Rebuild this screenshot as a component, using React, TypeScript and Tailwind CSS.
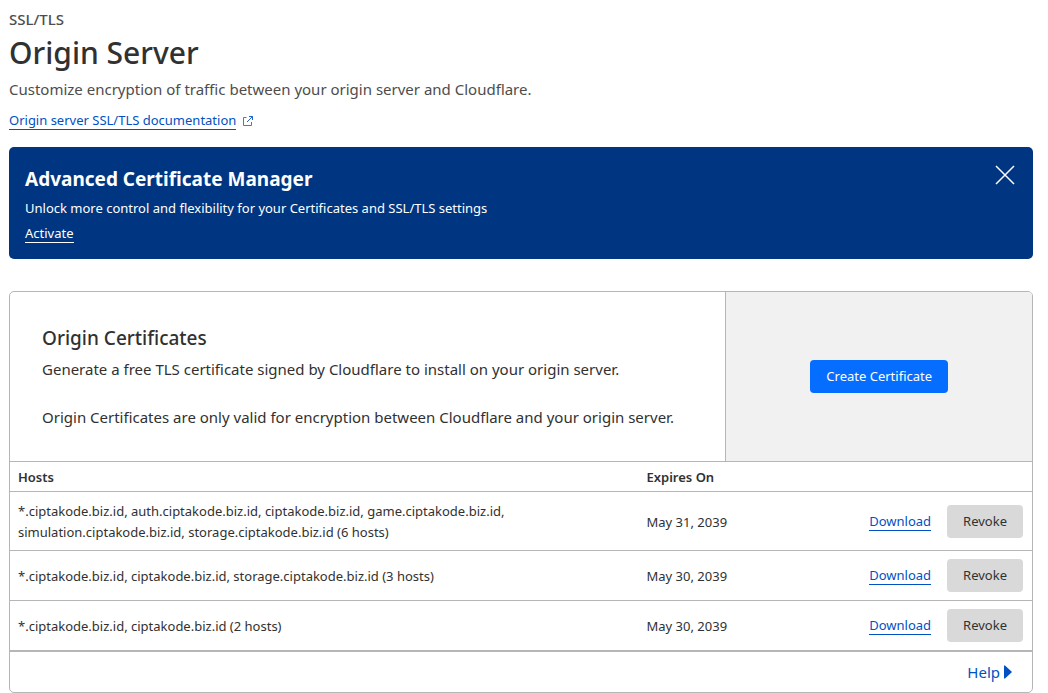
import React from "react";

type Certificate = {
  hosts: string;
  expires: string;
};

const certificates: Certificate[] = [
  {
    hosts:
      "*.ciptakode.biz.id, auth.ciptakode.biz.id, ciptakode.biz.id, game.ciptakode.biz.id, simulation.ciptakode.biz.id, storage.ciptakode.biz.id (6 hosts)",
    expires: "May 31, 2039",
  },
  {
    hosts: "*.ciptakode.biz.id, ciptakode.biz.id, storage.ciptakode.biz.id (3 hosts)",
    expires: "May 30, 2039",
  },
  {
    hosts: "*.ciptakode.biz.id, ciptakode.biz.id (2 hosts)",
    expires: "May 30, 2039",
  },
];

function ExternalLinkIcon() {
  return (
    <svg width="12" height="12" viewBox="0 0 12 12" fill="none" stroke="#3c7ad6" aria-hidden="true">
      <path d="M4.5 2.5H1.5V10.5H9.5V7" />
      <path d="M7 1.5H10.5V5M10.5 1.5L5 7" stroke="#1f63cb" />
    </svg>
  );
}

function PageHeader() {
  return (
    <header className="flex flex-col items-start">
      <p className="text-[15px] font-medium leading-5 text-[#4d4d4d]">SSL/TLS</p>
      <h1 className="mt-1 text-[30px] font-medium leading-10">Origin Server</h1>
      <p className="mt-1 text-[15px] leading-6 text-[#4d4d4d]">
        Customize encryption of traffic between your origin server and Cloudflare.
      </p>
      <a href="#documentation" className="mt-2.5 flex items-center gap-1.5 text-[13px] leading-[18px] text-[#0051c3]">
        <span className="border-b border-[#0051c3]">Origin server SSL/TLS documentation</span>
        <ExternalLinkIcon />
      </a>
    </header>
  );
}

function PromoBanner() {
  return (
    <section className="mt-[17px] flex items-start justify-between rounded-[5px] bg-[#003681] p-4 text-white">
      <div className="flex flex-col items-start">
        <h2 className="text-[19px] font-bold leading-8">Advanced Certificate Manager</h2>
        <p className="mt-[3px] text-[13px] leading-5">
          Unlock more control and flexibility for your Certificates and SSL/TLS settings
        </p>
        <a href="#activate" className="mt-1.5 border-b border-white text-[13px] leading-[18px]">
          Activate
        </a>
      </div>
      <button type="button" aria-label="Close" className="p-0.5">
        <svg width="20" height="24" viewBox="0 0 20 24" fill="none" stroke="white" strokeWidth="1.5" aria-hidden="true">
          <path d="M1 1L19 19M19 1L1 19" />
        </svg>
      </button>
    </section>
  );
}

function CertificateTable() {
  return (
    <table className="w-full table-fixed border-collapse text-left text-[13px] leading-[21px]">
      <thead>
        <tr className="border-y border-[#b6b6b6]">
          <th scope="col" className="w-[61.5%] px-2 pb-[3px] pt-[5px] font-semibold">Hosts</th>
          <th scope="col" className="px-2 pb-[3px] pt-[5px] font-semibold">Expires On</th>
          <th scope="col" aria-label="Actions" className="w-[200px]" />
        </tr>
      </thead>
      <tbody>
        {certificates.map((certificate) => (
          <tr key={certificate.hosts} className="border-b border-[#b6b6b6]">
            <td className="px-2 pb-[7px] pt-[9px]">{certificate.hosts}</td>
            <td className="px-2 pb-[7px] pt-[9px]">{certificate.expires}</td>
            <td className="py-2 pl-2 pr-[9px]">
              <div className="flex items-center justify-end gap-4">
                <a href="#download" className="border-b border-[#0051c3] leading-[18px] text-[#0051c3]">
                  Download
                </a>
                <button type="button" className="rounded-[4px] bg-[#d9d9d9] px-4 py-1.5">
                  Revoke
                </button>
              </div>
            </td>
          </tr>
        ))}
      </tbody>
    </table>
  );
}

function OriginCertificatesCard() {
  return (
    <section className="mt-8 overflow-hidden rounded-[5px] border border-[#b6b6b6]">
      <div className="flex">
        <div className="w-[70%] p-8">
          <h2 className="text-[19px] font-medium leading-7">Origin Certificates</h2>
          <p className="mt-[5px] text-[15px] leading-6">
            Generate a free TLS certificate signed by Cloudflare to install on your origin server.
          </p>
          <p className="mt-6 text-[15px] leading-6">
            Origin Certificates are only valid for encryption between Cloudflare and your origin server.
          </p>
        </div>
        <div className="flex w-[30%] items-center justify-center border-l border-[#b6b6b6] bg-[#f1f1f1]">
          <button
            type="button"
            className="rounded-[4px] bg-[#056dff] px-4 py-1.5 text-[13px] leading-[21px] text-white"
          >
            Create Certificate
          </button>
        </div>
      </div>
      <CertificateTable />
      <footer className="flex justify-end border-t border-[#b6b6b6] px-5 py-2">
        <a href="#help" className="flex items-center gap-1 text-[15px] leading-6 text-[#0051c3]">
          Help
          <svg width="8" height="14" viewBox="0 0 8 14" fill="#0051c3" aria-hidden="true">
            <path d="M0 0.5H1L8 7L1 13.5H0Z" />
          </svg>
        </a>
      </footer>
    </section>
  );
}

export default function App() {
  return (
    <main className="bg-white pl-[9px] pr-[15px] pt-[9px] font-['Noto_Sans','Open_Sans',sans-serif] text-[#313131]">
      <PageHeader />
      <PromoBanner />
      <OriginCertificatesCard />
    </main>
  );
}
